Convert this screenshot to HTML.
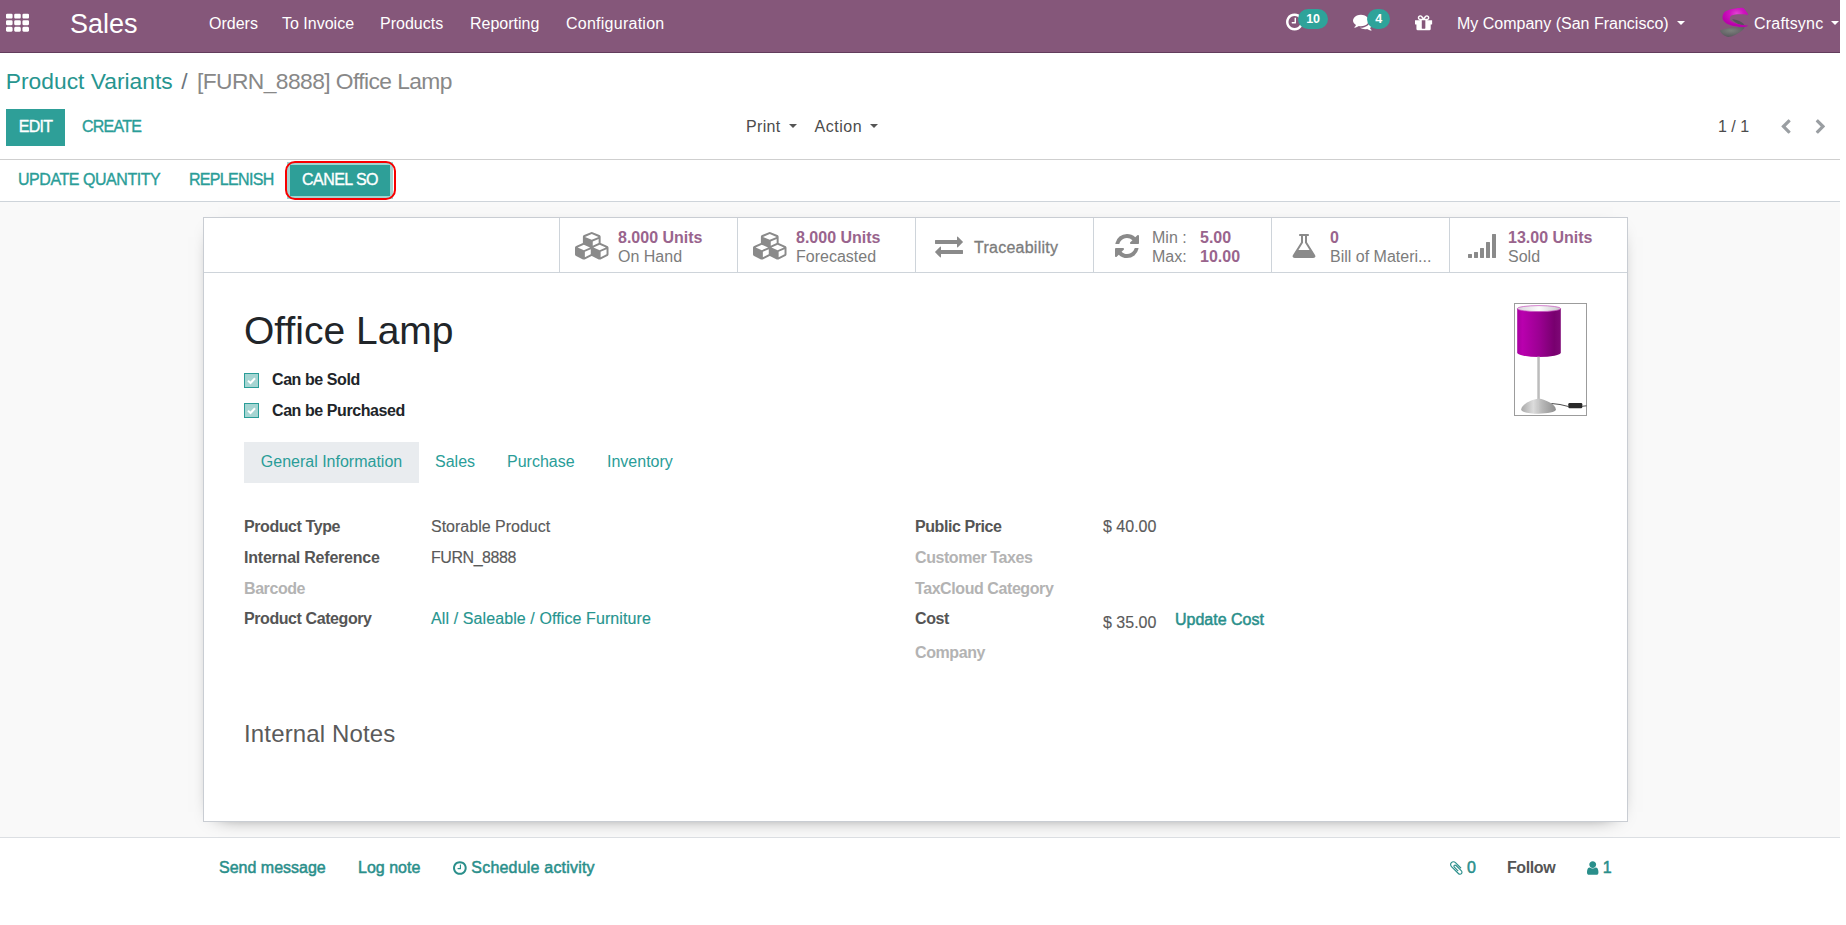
<!DOCTYPE html>
<html lang="en">
<head>
<meta charset="utf-8">
<title>[FURN_8888] Office Lamp - Odoo</title>
<style>
*{box-sizing:border-box}
html,body{margin:0;padding:0}
body{width:1846px;height:925px;overflow:hidden;background:#fff;font-family:"Liberation Sans",sans-serif;font-size:16px;color:#4c4c4c;line-height:1.5}
svg.fa{display:inline-block;fill:currentColor;vertical-align:middle;overflow:visible}
a{color:#27958f;text-decoration:none}
#app{position:absolute;left:0;top:0;width:1840px;height:925px;overflow:hidden}
.abs{position:absolute;white-space:nowrap}
/* navbar */
#nav{position:absolute;left:0;top:0;width:1840px;height:53px;background:#85577a;border-bottom:1px solid #623c5c;color:#fff}
#nav .abs{color:#fff}
.brand{font-size:27px;line-height:30px}
.menu{font-size:16px;line-height:20px}
.badge{position:absolute;background:#2ea39a;color:#fff;font-weight:bold;font-size:12.5px;line-height:20px;height:20px;border-radius:10px;text-align:center;letter-spacing:-0.3px}
.caret{position:absolute;width:0;height:0;border-left:4px solid transparent;border-right:4px solid transparent;border-top:4.5px solid #fff}
/* control panel */
#cp{position:absolute;left:0;top:53px;width:1840px;height:107px;background:#fff;border-bottom:1px solid #cfcfcf}
.bc{font-size:22.8px;line-height:28px}
.btn{position:absolute;font-size:16px;line-height:20px;text-transform:uppercase;white-space:nowrap;-webkit-text-stroke:0.35px currentColor;letter-spacing:-0.6px}
.btn-primary{background:#2e9f98;color:#fff;text-align:center}
.btn-link{color:#2a9d98}
/* status bar */
#sb{position:absolute;left:0;top:160px;width:1840px;height:42px;background:#fff;border-bottom:1px solid #ced4da}
/* content */
#content{position:absolute;left:0;top:202px;width:1840px;height:636px;background:#f9f9f9;border-bottom:1px solid #dcdfe3}
#sheet{position:absolute;left:203px;top:15px;width:1425px;height:605px;background:#fff;border:1px solid #c9cdd3;box-shadow:0 5px 20px -15px #000}
#bbox{position:absolute;left:0;top:0;width:1423px;height:55px;border-bottom:1px solid #ced4da}
.sbtn{position:absolute;top:0;width:178px;height:54px;border-left:1px solid #ced4da;color:#7c7c7c}
.sbtn .ic{position:absolute;color:#8a8a8a}
.sbtn .t{position:absolute;left:58px;font-size:16px;line-height:19px;white-space:nowrap}
.sbtn .v{color:#99648d;font-weight:bold}
h1{position:absolute;margin:0;font-weight:normal;font-size:39px;line-height:46px;color:#212529;white-space:nowrap}
.cb{position:absolute;width:15px;height:15px;background:#a5d5d2;border:1px solid #2a9d98}
.lbl{position:absolute;font-weight:bold;font-size:16px;line-height:20px;color:#555;white-space:nowrap;letter-spacing:-0.42px}
.lbl.mut{color:#b3b3b3}
.val{position:absolute;font-size:16px;line-height:20px;color:#5a5a5a;white-space:nowrap;-webkit-text-stroke:0.15px currentColor}
.tab{position:absolute;top:224px;height:41px;font-size:16px;line-height:39px;color:#2a9d98;white-space:nowrap}
.tab.act{background:#e9ecef;text-align:center}
/* chatter */
#chat{position:absolute;left:0;top:838px;width:1840px;height:87px;background:#fff}
.cl{position:absolute;top:20px;font-size:16px;line-height:20px;color:#2a8f8b;white-space:nowrap;-webkit-text-stroke:0.5px currentColor}
</style>
</head>
<body>
<div id="app">
<div id="nav">
<div class="abs" style="left:6px;top:12px;height:23px;line-height:0"><svg class="fa" width="23.00" height="23.00" viewBox="0 -1536 1792 1792" aria-hidden="true"><path transform="scale(1,-1)" d="M512 288v-192q0 -40 -28 -68t-68 -28h-320q-40 0 -68 28t-28 68v192q0 40 28 68t68 28h320q40 0 68 -28t28 -68zM512 800v-192q0 -40 -28 -68t-68 -28h-320q-40 0 -68 28t-28 68v192q0 40 28 68t68 28h320q40 0 68 -28t28 -68zM1152 288v-192q0 -40 -28 -68t-68 -28h-320 q-40 0 -68 28t-28 68v192q0 40 28 68t68 28h320q40 0 68 -28t28 -68zM512 1312v-192q0 -40 -28 -68t-68 -28h-320q-40 0 -68 28t-28 68v192q0 40 28 68t68 28h320q40 0 68 -28t28 -68zM1152 800v-192q0 -40 -28 -68t-68 -28h-320q-40 0 -68 28t-28 68v192q0 40 28 68t68 28 h320q40 0 68 -28t28 -68zM1792 288v-192q0 -40 -28 -68t-68 -28h-320q-40 0 -68 28t-28 68v192q0 40 28 68t68 28h320q40 0 68 -28t28 -68zM1152 1312v-192q0 -40 -28 -68t-68 -28h-320q-40 0 -68 28t-28 68v192q0 40 28 68t68 28h320q40 0 68 -28t28 -68zM1792 800v-192 q0 -40 -28 -68t-68 -28h-320q-40 0 -68 28t-28 68v192q0 40 28 68t68 28h320q40 0 68 -28t28 -68zM1792 1312v-192q0 -40 -28 -68t-68 -28h-320q-40 0 -68 28t-28 68v192q0 40 28 68t68 28h320q40 0 68 -28t28 -68z"/></svg></div>
<div class="abs brand" style="left:70px;top:9px">Sales</div>
<div class="abs menu" style="left:209px;top:14px">Orders</div>
<div class="abs menu" style="left:282px;top:14px">To Invoice</div>
<div class="abs menu" style="left:380px;top:14px">Products</div>
<div class="abs menu" style="left:470px;top:14px">Reporting</div>
<div class="abs menu" style="left:566px;top:14px;letter-spacing:0.25px">Configuration</div>
<div class="abs" style="left:1286px;top:11.6px;line-height:0"><svg class="fa" width="17.14" height="20.00" viewBox="0 -1536 1536 1792" aria-hidden="true"><path transform="scale(1,-1)" d="M896 992v-448q0 -14 -9 -23t-23 -9h-320q-14 0 -23 9t-9 23v64q0 14 9 23t23 9h224v352q0 14 9 23t23 9h64q14 0 23 -9t9 -23zM1312 640q0 148 -73 273t-198 198t-273 73t-273 -73t-198 -198t-73 -273t73 -273t198 -198t273 -73t273 73t198 198t73 273zM1536 640 q0 -209 -103 -385.5t-279.5 -279.5t-385.5 -103t-385.5 103t-279.5 279.5t-103 385.5t103 385.5t279.5 279.5t385.5 103t385.5 -103t279.5 -279.5t103 -385.5z"/></svg></div>
<div class="badge" style="left:1298px;top:9px;width:30px">10</div>
<div class="abs" style="left:1352.5px;top:12.1px;line-height:0"><svg class="fa" width="20.00" height="20.00" viewBox="0 -1536 1792 1792" aria-hidden="true"><path transform="scale(1,-1)" d="M1408 768q0 -139 -94 -257t-256.5 -186.5t-353.5 -68.5q-86 0 -176 16q-124 -88 -278 -128q-36 -9 -86 -16h-3q-11 0 -20.5 8t-11.5 21q-1 3 -1 6.5t0.5 6.5t2 6l2.5 5t3.5 5.5t4 5t4.5 5t4 4.5q5 6 23 25t26 29.5t22.5 29t25 38.5t20.5 44q-124 72 -195 177t-71 224 q0 139 94 257t256.5 186.5t353.5 68.5t353.5 -68.5t256.5 -186.5t94 -257zM1792 512q0 -120 -71 -224.5t-195 -176.5q10 -24 20.5 -44t25 -38.5t22.5 -29t26 -29.5t23 -25q1 -1 4 -4.5t4.5 -5t4 -5t3.5 -5.5l2.5 -5t2 -6t0.5 -6.5t-1 -6.5q-3 -14 -13 -22t-22 -7 q-50 7 -86 16q-154 40 -278 128q-90 -16 -176 -16q-271 0 -472 132q58 -4 88 -4q161 0 309 45t264 129q125 92 192 212t67 254q0 77 -23 152q129 -71 204 -178t75 -230z"/></svg></div>
<div class="badge" style="left:1367px;top:9px;width:23px">4</div>
<div class="abs" style="left:1415px;top:12.5px;line-height:0"><svg class="fa" width="17.14" height="20.00" viewBox="0 -1536 1536 1792" aria-hidden="true"><path transform="scale(1,-1)" d="M928 180v56v468v192h-320v-192v-468v-56q0 -25 18 -38.5t46 -13.5h192q28 0 46 13.5t18 38.5zM472 1024h195l-126 161q-26 31 -69 31q-40 0 -68 -28t-28 -68t28 -68t68 -28zM1160 1120q0 40 -28 68t-68 28q-43 0 -69 -31l-125 -161h194q40 0 68 28t28 68zM1536 864v-320 q0 -14 -9 -23t-23 -9h-96v-416q0 -40 -28 -68t-68 -28h-1088q-40 0 -68 28t-28 68v416h-96q-14 0 -23 9t-9 23v320q0 14 9 23t23 9h440q-93 0 -158.5 65.5t-65.5 158.5t65.5 158.5t158.5 65.5q107 0 168 -77l128 -165l128 165q61 77 168 77q93 0 158.5 -65.5t65.5 -158.5 t-65.5 -158.5t-158.5 -65.5h440q14 0 23 -9t9 -23z"/></svg></div>
<div class="abs menu" style="left:1457px;top:14px">My Company (San Francisco)</div>
<div class="caret" style="left:1677px;top:21px"></div>
<div class="abs" style="left:1712px;top:2px;line-height:0"><!--LOGO--><svg width="44" height="42" viewBox="0 0 44 42"><defs><radialGradient id="lgm" cx="0.55" cy="0.3" r="0.6"><stop offset="0" stop-color="#e244d2"/><stop offset="0.45" stop-color="#cf14bf"/><stop offset="1" stop-color="#b900ab"/></radialGradient><radialGradient id="lgg" cx="0.45" cy="0.35" r="0.6"><stop offset="0" stop-color="#7c807c"/><stop offset="1" stop-color="#5c5b60"/></radialGradient></defs><path d="M32.70 25.40 C31.78 25.38 29.40 25.28 27.20 25.30 C25.00 25.32 21.77 25.25 19.50 25.50 C17.23 25.75 15.57 26.28 13.60 26.80 C11.63 27.32 8.68 28.30 7.70 28.60 C8.15 29.20 9.18 31.18 10.40 32.20 C11.62 33.22 13.55 34.32 15.00 34.70 C16.45 35.08 17.52 34.92 19.10 34.50 C20.68 34.08 22.77 33.10 24.50 32.20 C26.23 31.30 28.13 30.23 29.50 29.10 C30.87 27.97 32.17 26.02 32.70 25.40 Z" fill="url(#lgg)"/><path d="M20.00 17.00 C20.58 17.13 22.30 17.45 23.50 17.80 C24.70 18.15 25.97 18.52 27.20 19.10 C28.43 19.68 30.02 20.58 30.90 21.30 C31.78 22.02 32.23 23.05 32.50 23.40 C32.00 23.33 30.45 23.20 29.50 23.00 C28.55 22.80 27.93 22.75 26.80 22.20 C25.67 21.65 23.83 20.57 22.70 19.70 C21.57 18.83 20.45 17.45 20.00 17.00 Z" fill="#55545a"/><path d="M35.90 12.00 C35.55 11.47 34.48 9.73 33.80 8.80 C33.12 7.87 32.58 6.90 31.80 6.40 C31.02 5.90 30.77 5.73 29.10 5.80 C27.43 5.87 24.08 6.37 21.80 6.80 C19.52 7.23 17.03 7.75 15.40 8.40 C13.77 9.05 12.82 9.60 12.00 10.70 C11.18 11.80 10.60 13.68 10.50 15.00 C10.40 16.32 10.73 17.50 11.40 18.60 C12.07 19.70 13.15 20.77 14.50 21.60 C15.85 22.43 17.38 23.05 19.50 23.60 C21.62 24.15 24.85 24.70 27.20 24.90 C29.55 25.10 32.08 25.05 33.60 24.80 C35.12 24.55 35.85 23.63 36.30 23.40 C35.55 23.37 33.38 23.38 31.80 23.20 C30.22 23.02 28.55 22.80 26.80 22.30 C25.05 21.80 22.73 20.88 21.30 20.20 C19.87 19.52 18.77 18.92 18.20 18.20 C17.63 17.48 17.68 16.67 17.90 15.90 C18.12 15.13 18.55 14.18 19.50 13.60 C20.45 13.02 21.93 12.63 23.60 12.40 C25.27 12.17 27.45 12.12 29.50 12.20 C31.55 12.28 34.83 12.78 35.90 12.90 Z" fill="url(#lgm)"/></svg><!--/LOGO--></div>
<div class="abs menu" style="left:1754px;top:14px;letter-spacing:0.2px">Craftsync</div>
<div class="caret" style="left:1831px;top:21px"></div>
</div>
<div id="cp">
<div class="abs bc" style="left:5.8px;top:13.5px"><a href="#">Product Variants</a><span style="color:#6c757d;padding:0 9.5px 0 8.5px">/</span><span style="color:#888;letter-spacing:-0.58px">[FURN_8888] Office Lamp</span></div>
<div class="btn btn-primary" style="left:6px;top:56px;width:59px;height:37px;line-height:36px;letter-spacing:-0.7px">Edit</div>
<div class="btn btn-link" style="left:82px;top:64px;letter-spacing:-0.75px">Create</div>
<div class="abs menu" style="left:746px;top:64px;color:#4c4c4c;letter-spacing:0.35px">Print</div>
<div class="caret" style="left:789px;top:71px;border-top-color:#555"></div>
<div class="abs menu" style="left:814.6px;top:64px;color:#4c4c4c;letter-spacing:0.5px">Action</div>
<div class="caret" style="left:870px;top:71px;border-top-color:#555"></div>
<div class="abs menu" style="left:1718px;top:64px;color:#4c4c4c">1 / 1</div>
<div class="abs" style="left:1780px;top:66.2px;line-height:0;color:#9a9ea2"><svg class="fa" width="11.43" height="16.00" viewBox="0 -1536 1280 1792" aria-hidden="true"><path transform="scale(1,-1)" d="M1171 1235l-531 -531l531 -531q19 -19 19 -45t-19 -45l-166 -166q-19 -19 -45 -19t-45 19l-742 742q-19 19 -19 45t19 45l742 742q19 19 45 19t45 -19l166 -166q19 -19 19 -45t-19 -45z"/></svg></div>
<div class="abs" style="left:1815.4px;top:66.2px;line-height:0;color:#9a9ea2"><svg class="fa" width="11.43" height="16.00" viewBox="0 -1536 1280 1792" aria-hidden="true"><path transform="scale(1,-1)" d="M1107 659l-742 -742q-19 -19 -45 -19t-45 19l-166 166q-19 19 -19 45t19 45l531 531l-531 531q-19 19 -19 45t19 45l166 166q19 19 45 19t45 -19l742 -742q19 -19 19 -45t-19 -45z"/></svg></div>
</div>
<div id="sb">
<div class="btn btn-link" style="left:18px;top:10px;letter-spacing:-0.45px">Update Quantity</div>
<div class="btn btn-link" style="left:189px;top:10px;letter-spacing:-0.68px">Replenish</div>
<div class="btn btn-primary" style="left:290px;top:5px;width:100px;height:30.5px;line-height:30px;letter-spacing:-0.55px;box-shadow:0 0 0 3px rgba(46,159,152,.45)">Canel SO</div>
<div class="abs" style="left:285px;top:1px;width:111px;height:39.3px;border:2.5px solid #f80000;border-radius:10px"></div>
</div>
<div id="content">
<div id="sheet">
<div id="bbox">
<div class="sbtn" style="left:355px"><div class="ic" style="left:15px;top:14px;line-height:0"><svg class="fa" width="35.49" height="27.60" viewBox="0 -1536 2304 1792" aria-hidden="true"><path transform="scale(1,-1)" d="M640 -96l384 192v314l-384 -164v-342zM576 358l404 173l-404 173l-404 -173zM1664 -96l384 192v314l-384 -164v-342zM1600 358l404 173l-404 173l-404 -173zM1152 651l384 165v266l-384 -164v-267zM1088 1030l441 189l-441 189l-441 -189zM2176 512v-416q0 -36 -19 -67 t-52 -47l-448 -224q-25 -14 -57 -14t-57 14l-448 224q-4 2 -7 4q-2 -2 -7 -4l-448 -224q-25 -14 -57 -14t-57 14l-448 224q-33 16 -52 47t-19 67v416q0 38 21.5 70t56.5 48l434 186v400q0 38 21.5 70t56.5 48l448 192q23 10 50 10t50 -10l448 -192q35 -16 56.5 -48t21.5 -70 v-400l434 -186q36 -16 57 -48t21 -70z"/></svg></div><div class="t v" style="top:10px">8.000 Units</div><div class="t" style="top:29.3px">On Hand</div></div>
<div class="sbtn" style="left:533px"><div class="ic" style="left:15px;top:14px;line-height:0"><svg class="fa" width="35.49" height="27.60" viewBox="0 -1536 2304 1792" aria-hidden="true"><path transform="scale(1,-1)" d="M640 -96l384 192v314l-384 -164v-342zM576 358l404 173l-404 173l-404 -173zM1664 -96l384 192v314l-384 -164v-342zM1600 358l404 173l-404 173l-404 -173zM1152 651l384 165v266l-384 -164v-267zM1088 1030l441 189l-441 189l-441 -189zM2176 512v-416q0 -36 -19 -67 t-52 -47l-448 -224q-25 -14 -57 -14t-57 14l-448 224q-4 2 -7 4q-2 -2 -7 -4l-448 -224q-25 -14 -57 -14t-57 14l-448 224q-33 16 -52 47t-19 67v416q0 38 21.5 70t56.5 48l434 186v400q0 38 21.5 70t56.5 48l448 192q23 10 50 10t50 -10l448 -192q35 -16 56.5 -48t21.5 -70 v-400l434 -186q36 -16 57 -48t21 -70z"/></svg></div><div class="t v" style="top:10px">8.000 Units</div><div class="t" style="top:29.3px">Forecasted</div></div>
<div class="sbtn" style="left:711px"><div class="ic" style="left:19px;top:14px;line-height:0"><svg class="fa" width="28.00" height="28.00" viewBox="0 -1536 1792 1792" aria-hidden="true"><path transform="scale(1,-1)" d="M1792 352v-192q0 -13 -9.5 -22.5t-22.5 -9.5h-1376v-192q0 -13 -9.5 -22.5t-22.5 -9.5q-12 0 -24 10l-319 320q-9 9 -9 22q0 14 9 23l320 320q9 9 23 9q13 0 22.5 -9.5t9.5 -22.5v-192h1376q13 0 22.5 -9.5t9.5 -22.5zM1792 896q0 -14 -9 -23l-320 -320q-9 -9 -23 -9 q-13 0 -22.5 9.5t-9.5 22.5v192h-1376q-13 0 -22.5 9.5t-9.5 22.5v192q0 13 9.5 22.5t22.5 9.5h1376v192q0 14 9 23t23 9q12 0 24 -10l319 -319q9 -9 9 -23z"/></svg></div><div class="t" style="top:20px;letter-spacing:0.25px;-webkit-text-stroke:0.3px currentColor">Traceability</div></div>
<div class="sbtn" style="left:889px"><div class="ic" style="left:21px;top:14px;line-height:0"><svg class="fa" width="24.00" height="28.00" viewBox="0 -1536 1536 1792" aria-hidden="true"><path transform="scale(1,-1)" d="M1511 480q0 -5 -1 -7q-64 -268 -268 -434.5t-478 -166.5q-146 0 -282.5 55t-243.5 157l-129 -129q-19 -19 -45 -19t-45 19t-19 45v448q0 26 19 45t45 19h448q26 0 45 -19t19 -45t-19 -45l-137 -137q71 -66 161 -102t187 -36q134 0 250 65t186 179q11 17 53 117 q8 23 30 23h192q13 0 22.5 -9.5t9.5 -22.5zM1536 1280v-448q0 -26 -19 -45t-45 -19h-448q-26 0 -45 19t-19 45t19 45l138 138q-148 137 -349 137q-134 0 -250 -65t-186 -179q-11 -17 -53 -117q-8 -23 -30 -23h-199q-13 0 -22.5 9.5t-9.5 22.5v7q65 268 270 434.5t480 166.5 q146 0 284 -55.5t245 -156.5l130 129q19 19 45 19t45 -19t19 -45z"/></svg></div><div class="t" style="top:10px">Min :</div><div class="t v" style="top:10px;left:106px">5.00</div><div class="t" style="top:29.3px">Max:</div><div class="t v" style="top:29.3px;left:106px">10.00</div></div>
<div class="sbtn" style="left:1067px"><div class="ic" style="left:19px;top:14px;line-height:0"><svg class="fa" width="26.00" height="28.00" viewBox="0 -1536 1664 1792" aria-hidden="true"><path transform="scale(1,-1)" d="M1527 88q56 -89 21.5 -152.5t-140.5 -63.5h-1152q-106 0 -140.5 63.5t21.5 152.5l503 793v399h-64q-26 0 -45 19t-19 45t19 45t45 19h512q26 0 45 -19t19 -45t-19 -45t-45 -19h-64v-399zM748 813l-272 -429h712l-272 429l-20 31v37v399h-128v-399v-37z"/></svg></div><div class="t v" style="top:10px">0</div><div class="t" style="top:29.3px">Bill of Materi...</div></div>
<div class="sbtn" style="left:1245px"><div class="ic" style="left:18px;top:14px;line-height:0"><svg class="fa" width="28.00" height="28.00" viewBox="0 -1536 1792 1792" aria-hidden="true"><path transform="scale(1,-1)" d="M256 96v-192q0 -14 -9 -23t-23 -9h-192q-14 0 -23 9t-9 23v192q0 14 9 23t23 9h192q14 0 23 -9t9 -23zM640 224v-320q0 -14 -9 -23t-23 -9h-192q-14 0 -23 9t-9 23v320q0 14 9 23t23 9h192q14 0 23 -9t9 -23zM1024 480v-576q0 -14 -9 -23t-23 -9h-192q-14 0 -23 9t-9 23 v576q0 14 9 23t23 9h192q14 0 23 -9t9 -23zM1408 864v-960q0 -14 -9 -23t-23 -9h-192q-14 0 -23 9t-9 23v960q0 14 9 23t23 9h192q14 0 23 -9t9 -23zM1792 1376v-1472q0 -14 -9 -23t-23 -9h-192q-14 0 -23 9t-9 23v1472q0 14 9 23t23 9h192q14 0 23 -9t9 -23z"/></svg></div><div class="t v" style="top:10px">13.00 Units</div><div class="t" style="top:29.3px">Sold</div></div>
</div>
<h1 style="left:40px;top:90px">Office Lamp</h1>
<div class="cb" style="left:40px;top:155px"><svg width="13" height="13" viewBox="0 0 13 13" style="position:absolute;left:0;top:0"><path d="M3 6.6 L5.5 9 L10 4.2" fill="none" stroke="#fff" stroke-width="2"/></svg></div><div class="lbl" style="left:68px;top:152.3px;color:#212529">Can be Sold</div>
<div class="cb" style="left:40px;top:185px"><svg width="13" height="13" viewBox="0 0 13 13" style="position:absolute;left:0;top:0"><path d="M3 6.6 L5.5 9 L10 4.2" fill="none" stroke="#fff" stroke-width="2"/></svg></div><div class="lbl" style="left:68px;top:183.3px;color:#212529">Can be Purchased</div>
<!--LAMP--><svg width="73" height="113" viewBox="0 0 73 113" style="position:absolute;left:1310px;top:85px"><defs>
<linearGradient id="ls" x1="0" x2="1" y1="0" y2="0"><stop offset="0" stop-color="#a800a0"/><stop offset=".12" stop-color="#b900ae"/><stop offset=".5" stop-color="#9c0093"/><stop offset=".85" stop-color="#78006f"/><stop offset="1" stop-color="#7e0876"/></linearGradient>
<linearGradient id="lt" x1="0" x2="1" y1="0" y2="0"><stop offset="0" stop-color="#d9d4dc"/><stop offset=".5" stop-color="#fbfbfb"/><stop offset="1" stop-color="#c9c6cc"/></linearGradient>
<linearGradient id="lb" x1="0" x2="1" y1="0" y2="0"><stop offset="0" stop-color="#a9a9a9"/><stop offset=".35" stop-color="#dcdcdc"/><stop offset=".6" stop-color="#b8b8b8"/><stop offset="1" stop-color="#8f8f8f"/></linearGradient>
</defs>
<rect x=".5" y=".5" width="72" height="112" fill="#fff" stroke="#9c9c9c"/>
<path d="M3.2 5.5V49.5A21.8 4.5 0 0 0 46.8 49.500V5.5Z" fill="url(#ls)"/>
<ellipse cx="25" cy="5.6" rx="21.6" ry="3" fill="url(#lt)" stroke="#c54fbd" stroke-width=".7"/>
<rect x="23.3" y="53.6" width="2.5" height="43" fill="#bcbcbc"/>
<path d="M7.2 106.500C7.5 101.500 17 96.800 24.500 95.600C32 96.800 41.600 101.500 41.900 106.500C41.900 112 7.200 112 7.200 106.500Z" fill="url(#lb)"/>
<path d="M24.5 96V110" stroke="#c9c9c9" stroke-width=".8"/>
<path d="M37.5 100.500Q46 101 54.500 103.500" stroke="#3a3a3a" stroke-width=".9" fill="none"/>
<rect x="54.300" y="100" width="14" height="5.200" rx="1.200" fill="#2a2a2a"/>
<path d="M68 103.300L72.500 102.800" stroke="#3a3a3a" stroke-width=".9"/>
</svg><!--/LAMP-->
<div class="tab act" style="left:40px;width:175px">General Information</div>
<div class="tab" style="left:231px">Sales</div>
<div class="tab" style="left:303px">Purchase</div>
<div class="tab" style="left:403px">Inventory</div>
<div class="lbl" style="left:40px;top:299px">Product Type</div><div class="val" style="left:227px;top:299px">Storable Product</div>
<div class="lbl" style="left:40px;top:330px;letter-spacing:-0.22px">Internal Reference</div><div class="val" style="left:227px;top:330px;letter-spacing:-0.45px">FURN_8888</div>
<div class="lbl mut" style="left:40px;top:361px">Barcode</div>
<div class="lbl" style="left:40px;top:391px">Product Category</div><div class="val" style="left:227px;top:391px;letter-spacing:0.1px"><a href="#">All / Saleable / Office Furniture</a></div>
<div class="lbl" style="left:711px;top:299px">Public Price</div><div class="val" style="left:899px;top:299px">$ 40.00</div>
<div class="lbl mut" style="left:711px;top:330px">Customer Taxes</div>
<div class="lbl mut" style="left:711px;top:361px">TaxCloud Category</div>
<div class="lbl" style="left:711px;top:391px">Cost</div><div class="val" style="left:899px;top:395px">$ 35.00</div>
<div class="val" style="left:971px;top:392px;color:#2a8f8b;-webkit-text-stroke:0.5px currentColor">Update Cost</div>
<div class="lbl mut" style="left:711px;top:425px">Company</div>
<div class="abs" style="left:40px;top:500px;font-size:24px;line-height:32px;color:#5a5a5a;letter-spacing:0.15px">Internal Notes</div>
</div>
</div>
<div id="chat">
<div class="cl" style="left:219px">Send message</div>
<div class="cl" style="left:358px">Log note</div>
<div class="cl" style="left:453px;letter-spacing:0.2px"><span style="position:relative;top:-1px"><svg class="fa" width="13.71" height="16.00" viewBox="0 -1536 1536 1792" aria-hidden="true"><path transform="scale(1,-1)" d="M896 992v-448q0 -14 -9 -23t-23 -9h-320q-14 0 -23 9t-9 23v64q0 14 9 23t23 9h224v352q0 14 9 23t23 9h64q14 0 23 -9t9 -23zM1312 640q0 148 -73 273t-198 198t-273 73t-273 -73t-198 -198t-73 -273t73 -273t198 -198t273 -73t273 73t198 198t73 273zM1536 640 q0 -209 -103 -385.5t-279.5 -279.5t-385.5 -103t-385.5 103t-279.5 279.5t-103 385.5t103 385.5t279.5 279.5t385.5 103t385.5 -103t279.5 -279.5t103 -385.5z"/></svg></span> Schedule activity</div>
<div class="cl" style="left:1450px"><span style="position:relative;top:-1px"><svg class="fa" width="12.57" height="16.00" viewBox="0 -1536 1408 1792" aria-hidden="true"><path transform="scale(1,-1)" d="M1404 151q0 -117 -79 -196t-196 -79q-135 0 -235 100l-777 776q-113 115 -113 271q0 159 110 270t269 111q158 0 273 -113l605 -606q10 -10 10 -22q0 -16 -30.5 -46.5t-46.5 -30.5q-13 0 -23 10l-606 607q-79 77 -181 77q-106 0 -179 -75t-73 -181q0 -105 76 -181 l776 -777q63 -63 145 -63q64 0 106 42t42 106q0 82 -63 145l-581 581q-26 24 -60 24q-29 0 -48 -19t-19 -48q0 -32 25 -59l410 -410q10 -10 10 -22q0 -16 -31 -47t-47 -31q-12 0 -22 10l-410 410q-63 61 -63 149q0 82 57 139t139 57q88 0 149 -63l581 -581q100 -98 100 -235 z"/></svg></span> 0</div>
<div class="cl" style="left:1507px;color:#555;font-weight:bold;-webkit-text-stroke:0;letter-spacing:-0.4px">Follow</div>
<div class="cl" style="left:1587px"><span style="position:relative;top:-1px"><svg class="fa" width="11.43" height="16.00" viewBox="0 -1536 1280 1792" aria-hidden="true"><path transform="scale(1,-1)" d="M1280 137q0 -109 -62.5 -187t-150.5 -78h-854q-88 0 -150.5 78t-62.5 187q0 85 8.5 160.5t31.5 152t58.5 131t94 89t134.5 34.5q131 -128 313 -128t313 128q76 0 134.5 -34.5t94 -89t58.5 -131t31.5 -152t8.5 -160.5zM1024 1024q0 -159 -112.5 -271.5t-271.5 -112.5 t-271.5 112.5t-112.5 271.5t112.5 271.5t271.5 112.5t271.5 -112.5t112.5 -271.5z"/></svg></span> 1</div>
</div>
</div>
</body>
</html>
